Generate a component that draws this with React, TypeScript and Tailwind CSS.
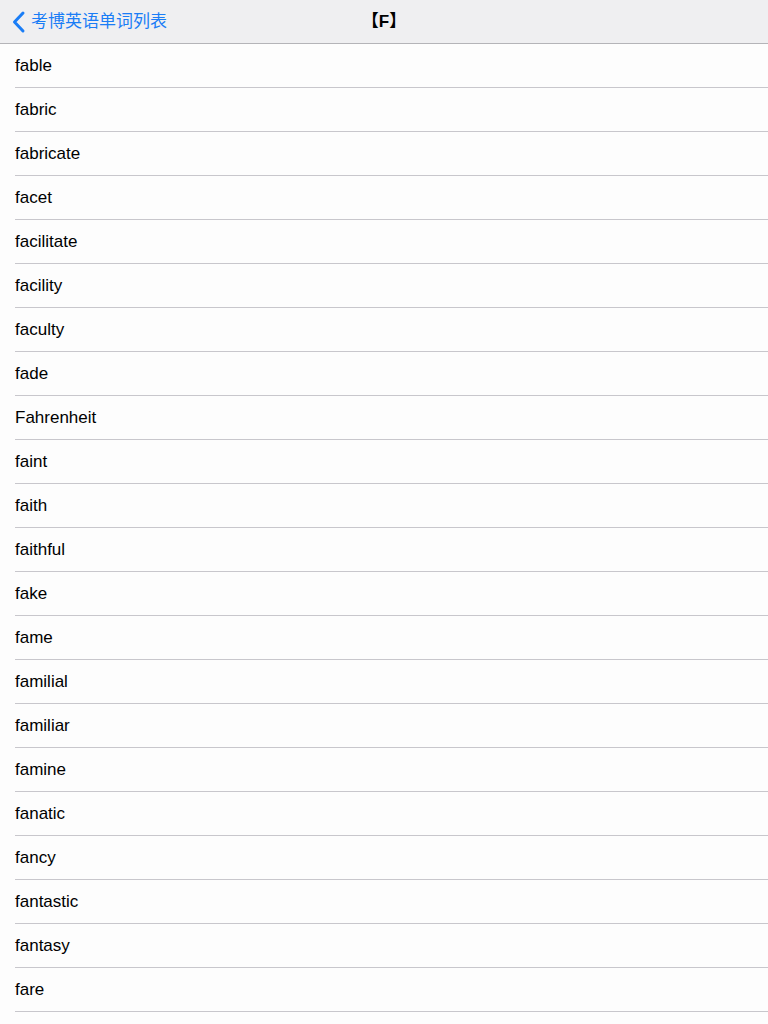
import React from "react";

const words = [
  "fable","fabric","fabricate","facet","facilitate","facility","faculty","fade","Fahrenheit","faint","faith","faithful","fake","fame","familial","familiar","famine","fanatic","fancy","fantastic","fantasy","fare",
];

export default function App() {
  return (
    <div className="w-[768px] h-[1024px] overflow-hidden bg-[#fdfdfd]" style={{ fontFamily: '"Liberation Sans", "Noto Sans CJK SC", sans-serif' }}>
      <div className="relative h-[44px] bg-[#efeff1] border-b border-[#b4b4b8] flex items-center">
        <div className="flex items-center pl-[11px] text-[#1a7df6]">
          <svg width="15" height="24" viewBox="0 0 15 24" className="mr-[5px]">
            <path d="M12 3 L3.5 12 L12 21" fill="none" stroke="#1a7df6" strokeWidth="3" strokeLinecap="round" strokeLinejoin="round" />
          </svg>
          <span className="text-[17px] leading-none">考博英语单词列表</span>
        </div>
        <div className="absolute left-0 right-0 top-0 h-[43px] flex items-center justify-center pointer-events-none">
          <span className="text-[17px] font-bold text-black leading-none">【F】</span>
        </div>
      </div>
      <div className="flex flex-col">
        {words.map((w) => (
          <div key={w} className="pl-[15px]">
            <div className="h-[44px] border-b border-[#c8c7cc] flex items-center">
              <span className="text-[17px] text-black leading-none">{w}</span>
            </div>
          </div>
        ))}
        <div className="h-[44px]" />
      </div>
    </div>
  );
}
